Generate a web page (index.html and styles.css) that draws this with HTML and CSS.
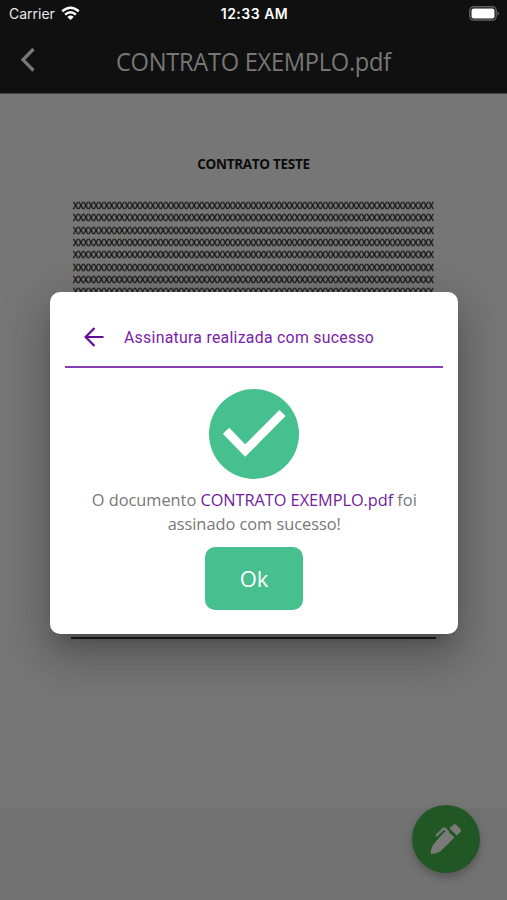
FILE: index.html
```html
<!DOCTYPE html>
<html lang="pt-BR">
<head>
<meta charset="utf-8">
<title>CONTRATO EXEMPLO.pdf</title>
<link rel="stylesheet" href="styles.css">
</head>
<body>
<div class="screen">
  <header class="top">
    <div class="status">
      <div class="carrier"><span class="carrier-name">Carrier</span>
        <svg class="wifi" width="19" height="15" viewBox="0 0 19 15"><g fill="none" stroke="#fff" stroke-width="2.5"><path d="M1.2 5.3Q9.5-1.8 17.8 5.3"/><path d="M4.1 8.6Q9.5 4 14.9 8.6"/></g><path fill="#fff" d="M6.3 10.9Q9.5 8.2 12.7 10.9L9.5 14Z"/></svg>
      </div>
      <span class="clock">12:33 AM</span>
      <svg class="battery" width="31" height="15" viewBox="0 0 31 15"><rect x=".8" y=".8" width="26.4" height="13.2" rx="3.8" fill="none" stroke="#606060" stroke-width="1.4"/><rect x="2.5" y="2.5" width="23" height="10" rx="2" fill="#fff"/><path d="M28.5 5Q31.5 7.5 28.5 10Z" fill="#606060"/></svg>
    </div>
    <div class="nav">
      <svg class="back" width="16" height="26" viewBox="0 0 16 26"><path d="M14.5 2L4 12.8 14.5 23.5" fill="none" stroke="#777" stroke-width="3.3"/></svg>
      <h1 class="title">CONTRATO EXEMPLO.pdf</h1>
    </div>
  </header>
  <main class="page">
    <h2 class="doc-title">CONTRATO TESTE</h2>
    <div class="doc-body">
      <p>XXXXXXXXXXXXXXXXXXXXXXXXXXXXXXXXXXXXXXXXXXXXXXXXXXXXXXXXXXXXXXXXXXXXXX</p>
      <p>XXXXXXXXXXXXXXXXXXXXXXXXXXXXXXXXXXXXXXXXXXXXXXXXXXXXXXXXXXXXXXXXXXXXXX</p>
      <p>XXXXXXXXXXXXXXXXXXXXXXXXXXXXXXXXXXXXXXXXXXXXXXXXXXXXXXXXXXXXXXXXXXXXXX</p>
      <p>XXXXXXXXXXXXXXXXXXXXXXXXXXXXXXXXXXXXXXXXXXXXXXXXXXXXXXXXXXXXXXXXXXXXXX</p>
      <p>XXXXXXXXXXXXXXXXXXXXXXXXXXXXXXXXXXXXXXXXXXXXXXXXXXXXXXXXXXXXXXXXXXXXXX</p>
      <p>XXXXXXXXXXXXXXXXXXXXXXXXXXXXXXXXXXXXXXXXXXXXXXXXXXXXXXXXXXXXXXXXXXXXXX</p>
      <p>XXXXXXXXXXXXXXXXXXXXXXXXXXXXXXXXXXXXXXXXXXXXXXXXXXXXXXXXXXXXXXXXXXXXXX</p>
      <p>XXXXXXXXXXXXXXXXXXXXXXXXXXXXXXXXXXXXXXXXXXXXXXXXXXXXXXXXXXXXXXXXXXXXXX</p>
    </div>
  </main>
  <div class="fab">
    <svg width="34" height="34" viewBox="0 0 34 34"><path d="M17.5 8.3L25.5 15.5 11.5 29.3Q8 32 2.5 32Q1.3 31.5 2 28Q2.7 24 6 20.5ZM20.5 6.3L24.8 2.5Q26 1.5 27.2 2.7L31.7 7.5Q32.7 8.7 31.6 9.8L27.8 13.5Z" fill="#7a7a7a"/><path d="M6 20.5L16 9.500 19 10 10 20Z" fill="#7a7a7a"/><path d="M7.500 13.500L13.700 7.300Q15 6 16.400 7.200L19 10" fill="none" stroke="#7a7a7a" stroke-width="2.400" stroke-linecap="round"/></svg>
  </div>
  <section class="dialog">
    <div class="dialog-head">
      <svg width="20" height="20" viewBox="0 0 20 20"><path d="M19.5 10H2M10.500 1L1.600 10l8.900 9" fill="none" stroke="#610d98" stroke-width="2.2"/></svg>
      <span class="dialog-title">Assinatura realizada com sucesso</span>
    </div>
    <svg class="check" width="90" height="90" viewBox="0 0 90 90"><circle cx="45" cy="45" r="45" fill="#45c08e"/><path d="M17 41.7L36.2 61.5 73.5 24" fill="none" stroke="#fff" stroke-width="8.8"/></svg>
    <p class="message">O documento <span class="file">CONTRATO EXEMPLO.pdf</span> foi<br>assinado com sucesso!</p>
    <button class="ok">Ok</button>
  </section>
</div>
</body>
</html>
```
FILE: styles.css
```css
* { box-sizing: border-box; }
body { margin: 0; }
h1, h2, p { margin: 0; font-weight: 400; }
svg { display: block; flex: none; }
.screen {
  position: relative;
  width: 507px;
  height: 900px;
  overflow: hidden;
  background: linear-gradient(#767676 0 808px, #727272 808px);
  font-family: "Open Sans", sans-serif;
}
.top { height: 94px; background: #101010; border-bottom: 1px solid #444; }
.status {
  display: grid;
  grid-template-columns: 1fr auto 1fr;
  height: 27px;
  padding: 0 7px 0 9px;
  align-items: center;
  color: #fff;
  font: 14px/27px Inter, sans-serif;
}
.carrier { display: flex; align-items: center; gap: 6px; color: #e8e8e8; }
.wifi { margin-top: -1px; }
.clock { font-weight: 600; letter-spacing: 0.5px; }
.battery { justify-self: end; }
.nav { display: flex; height: 66px; padding-left: 19px; align-items: center; }
.title {
  width: 276px;
  margin: 2px 0 0 81px;
  color: #777;
  font-size: 25px;
  line-height: 34px;
  letter-spacing: -0.3px;
  white-space: nowrap;
  transform: scaleX(.946);
  transform-origin: left;
}
.page { padding: 61px 71px 0; }
.doc-title {
  color: #0c0c0c;
  font: 700 13.5px/18px "Open Sans", sans-serif;
  text-align: center;
  white-space: nowrap;
  letter-spacing: -0.3px;
}
.doc-body {
  height: 466px;
  padding: 27px 2px 0;
  border-bottom: 2px solid #1b1b1b;
  color: #111;
  font: 900 9px/12.35px Lato, sans-serif;
  white-space: nowrap;
}
.doc-body p {
  width: 360px;
  transform: scaleX(.882);
  transform-origin: left;
  -webkit-text-stroke: 0.4px #111;
}
.fab {
  position: absolute;
  left: 412px;
  top: 805px;
  display: grid;
  place-items: center;
  width: 68px;
  height: 68px;
  border-radius: 50%;
  background: #215724;
  box-shadow: 0 4px 8px rgba(0, 0, 0, .25);
}
.dialog {
  position: absolute;
  left: 50px;
  top: 292px;
  display: flex;
  flex-direction: column;
  align-items: center;
  width: 408px;
  height: 342px;
  border-radius: 10px;
  background: #fff;
  box-shadow: 0 14px 20px -8px rgba(0, 0, 0, .2), 0 26px 40px 3px rgba(0, 0, 0, .14), 0 10px 48px 8px rgba(0, 0, 0, .12);
}
.dialog-head {
  display: flex;
  align-items: center;
  gap: 20px;
  width: 378px;
  height: 76px;
  padding: 15px 0 0 19px;
  border-bottom: 2px solid #8a3fb0;
  color: #7a22a8;
}
.dialog-title {
  font: 17px/24px Roboto, sans-serif;
  letter-spacing: 0.3px;
  white-space: nowrap;
  transform: scaleX(.931);
  transform-origin: left;
}
.check { margin-top: 21px; }
.message {
  margin-top: 9px;
  color: #777;
  font-size: 17px;
  line-height: 23.5px;
  text-align: center;
  white-space: nowrap;
  transform: scaleX(.96);
}
.file { color: #711ba2; letter-spacing: -0.05px; }
.ok {
  width: 98px;
  height: 63px;
  margin-top: 12px;
  padding: 0 0 2px;
  border: 0;
  border-radius: 10px;
  background: #45c08e;
  color: #fff;
  font: 22px/30px "Open Sans", sans-serif;
}
```
